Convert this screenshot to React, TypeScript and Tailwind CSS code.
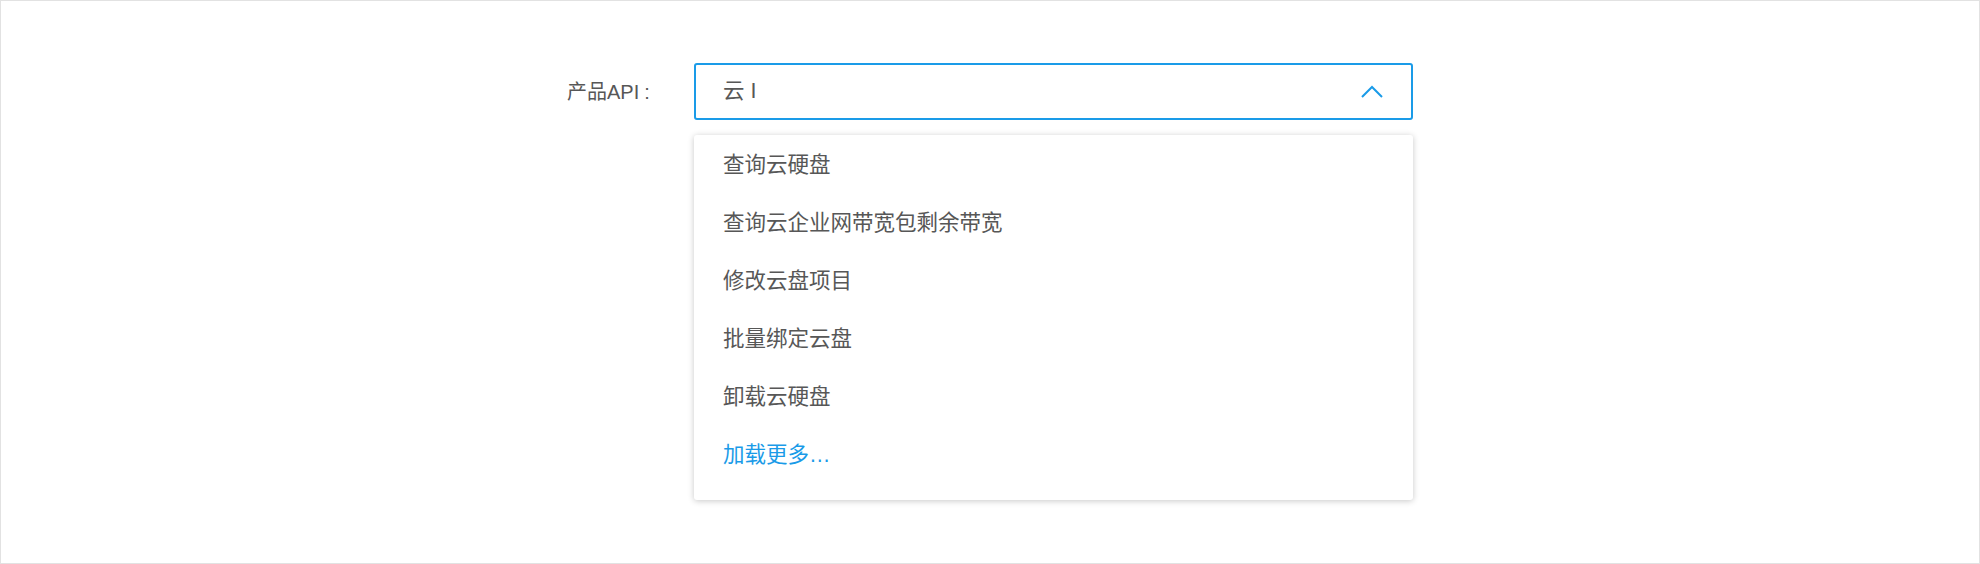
import React from 'react';

const ITEMS = ['查询云硬盘', '查询云企业网带宽包剩余带宽', '修改云盘项目', '批量绑定云盘', '卸载云硬盘'];

const App: React.FC = () => {
  return (
    <div className="h-[564px] w-full border border-[#e2e2e2] bg-white font-['Liberation_Sans','Noto_Sans_CJK_SC',sans-serif] text-[#575757]">
      <div className="flex pt-[62px] pl-[566px]">
        {/* Label */}
        <div className="flex h-[57px] w-[127px] items-center text-[20px]">
          产品API<span className="ml-[5px]">:</span>
        </div>

        <div className="w-[719px]">
          {/* Select input (open) */}
          <div className="flex h-[57px] items-center justify-between rounded-[3px] border-2 border-[#1a9be8] pl-[27px] pr-[28px] text-[21.5px]">
            <span>
              云 <span className="font-light">I</span>
            </span>
            <svg width="22" height="13" viewBox="0 0 22 13" fill="none">
              <polyline points="1,12 11,2 21,12" stroke="#1a9be8" strokeWidth="2" />
            </svg>
          </div>

          {/* Dropdown */}
          <div className="mt-[15px] rounded-[3px] bg-white pt-[1px] pb-[16px] shadow-[0_1px_6px_rgba(0,0,0,0.22)]">
            {ITEMS.map((item) => (
              <div key={item} className="flex h-[58px] items-center pl-[29px] text-[21.5px]">
                {item}
              </div>
            ))}
            <div className="flex h-[58px] items-center pl-[29px] text-[21.5px] text-[#1a9be8]">加载更多…</div>
          </div>
        </div>
      </div>
    </div>
  );
};

export default App;
